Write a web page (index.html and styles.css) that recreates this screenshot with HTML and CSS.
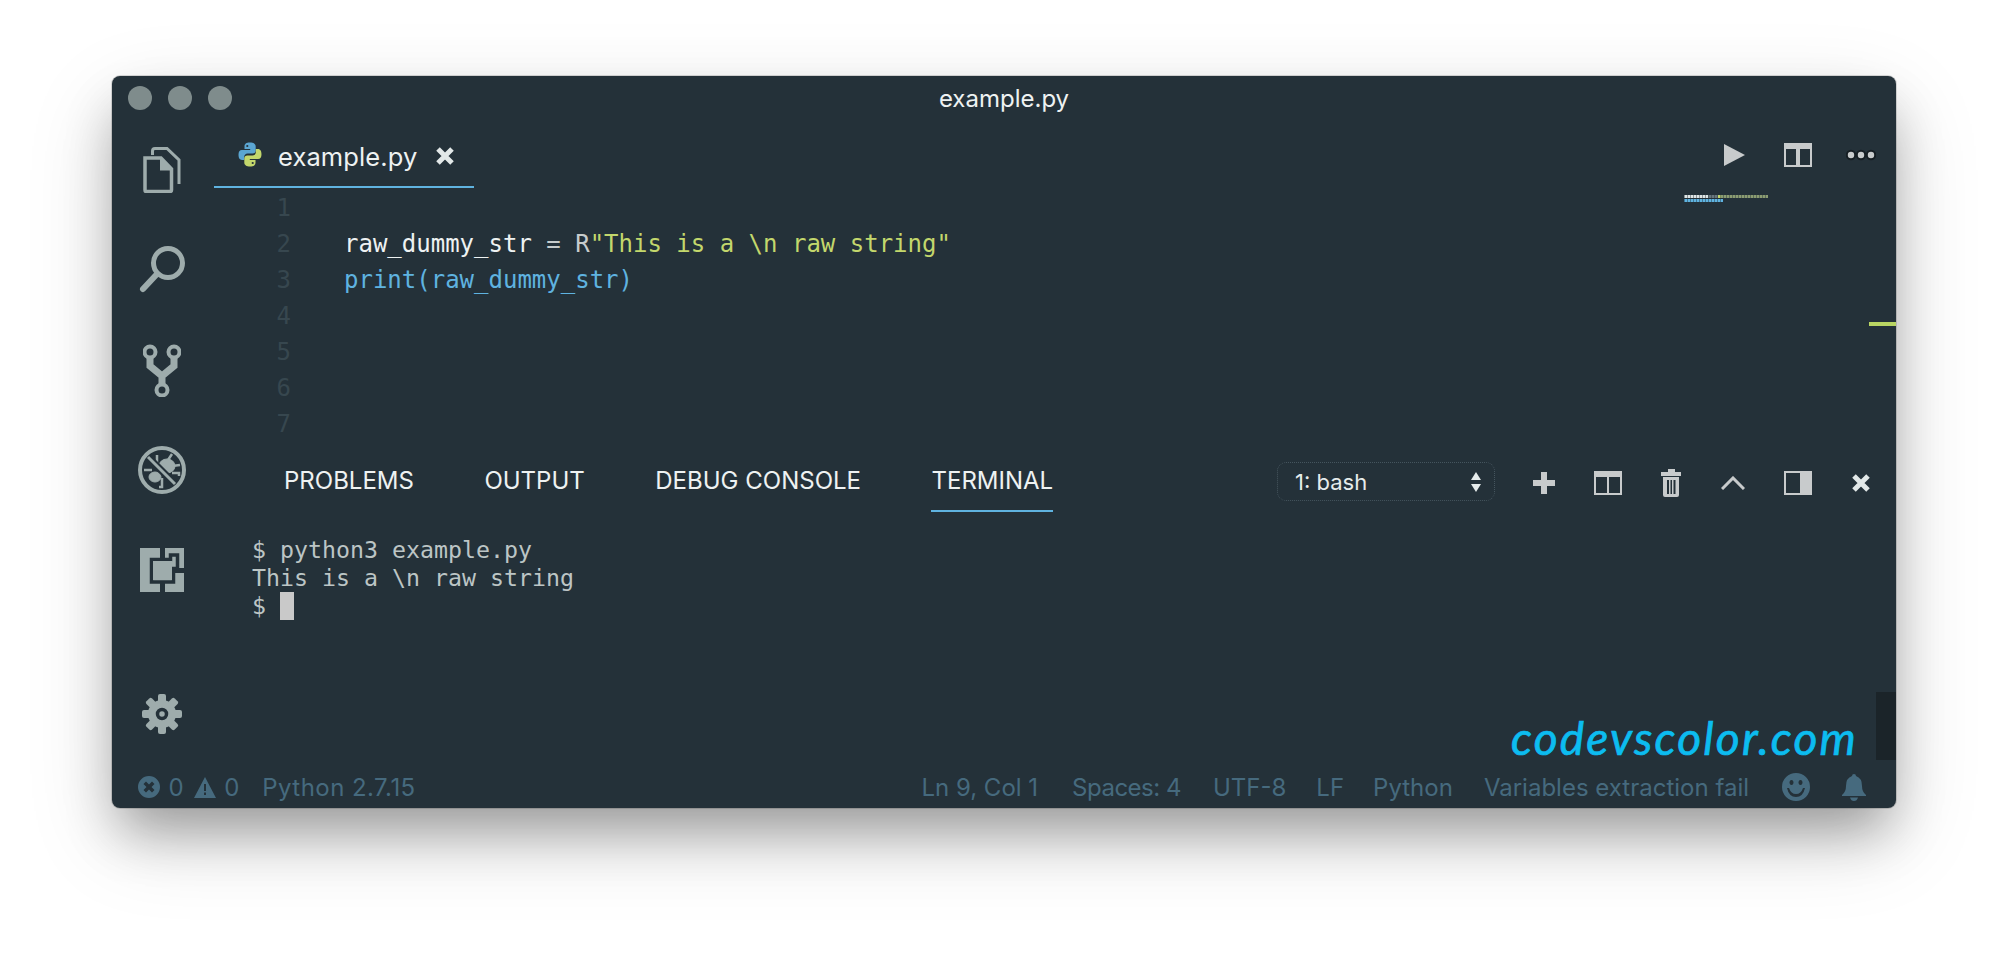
FILE: index.html
```html
<!DOCTYPE html>
<html lang="en">
<head>
<meta charset="utf-8">
<title>example.py</title>
<link rel="stylesheet" href="styles.css">
</head>
<body>
<div class="window">
  <header class="titlebar">
    <div class="lights"><span class="light"></span><span class="light"></span><span class="light"></span></div>
    <div class="title">example.py</div>
  </header>
  <div class="main">
    <nav class="activity">
      <div class="act">
        <svg class="ico" width="38" height="46" viewBox="0 0 38 46"><path d="M2 11 H18 L28.500 22 V43 Q28.500 44.500 27 44.500 H3 Q2 44.500 2 43 Z" fill="none" stroke-width="3.500"/><path d="M17 10 L30 23.500 H17 Z" stroke="none"/><path d="M9.500 8 V4 Q9.500 1.500 12 1.500 H24 L36 13 V37" fill="none" stroke-width="3"/></svg>
      </div>
      <div class="act">
        <svg class="ico" width="48" height="48" viewBox="0 0 48 48"><circle cx="30" cy="17" r="14.500" fill="none" stroke-width="5"/><path d="M19 28 L5 43" fill="none" stroke-width="6" stroke-linecap="round"/></svg>
      </div>
      <div class="act">
        <svg class="ico" width="38" height="53" viewBox="0 0 38 53"><circle cx="7" cy="8" r="5.500" fill="none" stroke-width="4"/><circle cx="31" cy="8" r="5.500" fill="none" stroke-width="4"/><circle cx="19" cy="46" r="5.500" fill="none" stroke-width="4"/><path d="M7 14 V22 L19 32 L31 22 V14 M19 31 V41" fill="none" stroke-width="7"/></svg>
      </div>
      <div class="act">
        <svg class="ico" width="48" height="48" viewBox="0 0 48 48"><circle cx="24" cy="24" r="22" fill="none" stroke-width="4"/><ellipse cx="17" cy="31" rx="6" ry="5"/><ellipse cx="29" cy="20" rx="8" ry="7"/><path d="M6 24 H14 M19 9 V18 M34 8 L30 14 M42 19 L34 20 M41 30 V27 H34 M24 32 V41 L21 41" fill="none" stroke-width="2.500"/><path d="M10 11 L37 38" class="slash-gap" fill="none" stroke-width="7"/><path d="M10 11 L37 38" fill="none" stroke-width="3"/></svg>
      </div>
      <div class="act">
        <svg class="ext" width="44" height="44" viewBox="0 0 44 44"><rect class="ext-light" width="44" height="44"/><path class="ext-dark" d="M11.500 34 V11.500 H30.500 V7 H37.500 V20.500 H33.500 V34 H11.500 Z" fill="none" stroke-width="3.500"/><path class="ext-gap" d="M22.500 0 V10 M34 22.500 H44 M22.500 34 V44" fill="none" stroke-width="5"/><path class="ext-light" d="M13 13 H32 V32 H13 Z"/></svg>
      </div>
      <div class="act act-gear">
        <svg class="ico" width="40" height="40" viewBox="0 0 40 40"><g stroke="none"><circle cx="20" cy="20" r="14"/><rect x="16" y="0" width="8" height="40" rx="2"/><rect x="16" y="0" width="8" height="40" rx="2" transform="rotate(45 20 20)"/><rect x="16" y="0" width="8" height="40" rx="2" transform="rotate(90 20 20)"/><rect x="16" y="0" width="8" height="40" rx="2" transform="rotate(135 20 20)"/></g><circle class="gear-hole" cx="20" cy="20" r="4.500" fill="none" stroke-width="3.500"/></svg>
      </div>
    </nav>
    <div class="content">
      <div class="tabbar">
        <div class="tab">
          <svg class="pylogo" width="24" height="25" viewBox="0 0 24 25"><path class="py-blue" d="M12 .5C8 .5 6.500 2 6.500 4.500V7h5.700v1H4C1.500 8 .5 10 .5 12.800S1.500 18 4 18h2.200v-3.200c0-2 1.500-3.300 3.500-3.300h5c1.800 0 3-1.300 3-3V4.500C17.700 2 15.500 .5 12 .5z"/><path class="py-green" d="M12 24.500c4 0 5.500-1.500 5.500-4V18h-5.700v-1H20c2.500 0 3.500-2 3.500-4.800S22.500 7 20 7h-2.200v3.200c0 2-1.500 3.300-3.500 3.300h-5c-1.800 0-3 1.300-3 3v4c0 2.500 2.200 4 5.700 4z"/><circle class="py-eye" cx="9.300" cy="4" r="1.100"/><circle class="py-eye" cx="14.700" cy="21" r="1.100"/></svg>
          <span class="tab-name">example.py</span>
          <svg class="tab-x" width="20" height="20" viewBox="0 0 20 20"><path d="M3 3 L17 17 M17 3 L3 17" fill="none" stroke-width="5"/></svg>
        </div>
        <div class="actions">
          <svg class="tool play" width="22" height="24" viewBox="0 0 22 24"><path d="M1 1 L22 12 L1 23 Z"/></svg>
          <svg class="tool" width="28" height="24" viewBox="0 0 28 24"><path d="M0 0 H28 V24 H0 Z M2 6 V22 H12 V6 Z M16 6 V22 H26 V6 Z" fill-rule="evenodd"/></svg>
          <svg class="tool dots" width="30" height="12" viewBox="0 0 30 12"><circle cx="5" cy="6" r="4.200"/><circle cx="15" cy="6" r="4.200"/><circle cx="25" cy="6" r="4.200"/></svg>
        </div>
      </div>
      <section class="editor">
        <div class="line"><span class="ln">1</span></div>
        <div class="line"><span class="ln">2</span><code class="code"><span class="c-var">raw_dummy_str</span> <span class="c-op">=</span> <span class="c-op">R</span><span class="c-str">"This is a \n raw string"</span></code></div>
        <div class="line"><span class="ln">3</span><code class="code c-fn">print(raw_dummy_str)</code></div>
        <div class="line"><span class="ln">4</span></div>
        <div class="line"><span class="ln">5</span></div>
        <div class="line"><span class="ln">6</span></div>
        <div class="line"><span class="ln">7</span></div>
        <div class="minimap"><span class="mm mm-a"></span><span class="mm mm-b"></span></div>
        <div class="marker"></div>
      </section>
      <section class="panel">
        <div class="panel-head">
          <div class="ptabs">
            <span class="ptab">PROBLEMS</span>
            <span class="ptab">OUTPUT</span>
            <span class="ptab">DEBUG CONSOLE</span>
            <span class="ptab ptab-on">TERMINAL</span>
          </div>
          <div class="ptools">
            <div class="select"><span>1: bash</span>
              <svg class="tool sel-arrows" width="12" height="22" viewBox="0 0 12 22"><path d="M6 1 L11 9 H1 Z M6 21 L11 13 H1 Z"/></svg>
            </div>
            <div class="ptool-row">
              <svg class="tool" width="22" height="22" viewBox="0 0 22 22"><path d="M8 0 H14 V8 H22 V14 H14 V22 H8 V14 H0 V8 H8 Z"/></svg>
              <svg class="tool" width="28" height="24" viewBox="0 0 28 24"><path d="M0 0 H28 V24 H0 Z M2 6 V22 H13 V6 Z M15 6 V22 H26 V6 Z" fill-rule="evenodd"/></svg>
              <svg class="tool" width="20" height="28" viewBox="0 0 20 28"><path d="M7 0 H14 V3 H20 V7 H0 V3 H7 Z M2 8 H18 V26 Q18 28 16 28 H4 Q2 28 2 26 Z M6 11 V25 H8 V11 Z M9.500 11 V25 H11 V11 Z M12.500 11 V25 H14.500 V11 Z" fill-rule="evenodd"/></svg>
              <svg class="tool" width="24" height="14" viewBox="0 0 24 14"><path d="M1 13 L12 2 L23 13" fill="none" stroke-width="3"/></svg>
              <svg class="tool" width="28" height="24" viewBox="0 0 28 24"><path d="M0 0 H28 V24 H0 Z M2 2 V22 H16 V2 Z" fill-rule="evenodd"/></svg>
              <svg class="tool tool-x" width="20" height="20" viewBox="0 0 20 20"><path d="M3 3 L17 17 M17 3 L3 17" fill="none" stroke-width="5"/></svg>
            </div>
          </div>
        </div>
        <div class="term">
          <div class="tline">$ python3 example.py</div>
          <div class="tline">This is a \n raw string</div>
          <div class="tline prompt">$ <span class="cursor"></span></div>
        </div>
        <div class="term-thumb"></div>
        <div class="brand">codevscolor.com</div>
      </section>
    </div>
  </div>
  <footer class="status">
    <div class="st-left">
      <svg class="st-ico" width="22" height="22" viewBox="0 0 22 22"><path d="M11 0a11 11 0 1 0 0 22a11 11 0 0 0 0-22z M5.500 8 L8 5.500 L11 8.500 L14 5.500 L16.500 8 L13.500 11 L16.500 14 L14 16.500 L11 13.500 L8 16.500 L5.500 14 L8.500 11 Z" fill-rule="evenodd"/></svg>
      <span class="st-num">0</span>
      <svg class="st-ico warn" width="22" height="21" viewBox="0 0 22 21"><path d="M11 0 L22 21 H0 Z M10 7 V14 H12 V7 Z M10 15.500 V18 H12 V15.500 Z" fill-rule="evenodd"/></svg>
      <span class="st-num">0</span>
      <span class="st-py">Python 2.7.15</span>
    </div>
    <div class="st-right">
      <span>Ln 9, Col 1</span>
      <span class="st-spaces">Spaces: 4</span>
      <span>UTF-8</span>
      <span class="st-lf">LF</span>
      <span>Python</span>
      <span class="st-msg">Variables extraction fail</span>
      <svg class="st-ico smile" width="28" height="28" viewBox="0 0 28 28"><path d="M14 0a14 14 0 1 0 0 28a14 14 0 0 0 0-28z M9.500 7 a2 2.500 0 1 1 -.01 0z M18.500 7 a2 2.500 0 1 1 -.01 0z M5 15 h2 Q9 21 14 21 T21 15 h2 Q21 24 14 24 T5 15z" fill-rule="evenodd"/></svg>
      <svg class="st-ico bell" width="24" height="27" viewBox="0 0 24 27"><path d="M12 0 Q14 0 14 2 Q20 4 20 12 Q20 18 24 21 V22 H0 V21 Q4 18 4 12 Q4 4 10 2 Q10 0 12 0 Z M8 23.500 H16 Q15 27 12 27 Q9 27 8 23.500 Z"/></svg>
    </div>
  </footer>
</div>
</body>
</html>
```

FILE: styles.css
```css
* { box-sizing: border-box; }
html, body { margin: 0; height: 100%; background: #fff; }
body { overflow: hidden; font-family: Inter, "Noto Sans", sans-serif; }

.window {
  position: relative;
  display: flex;
  flex-direction: column;
  width: 1784px;
  height: 732px;
  margin: 76px 0 0 112px;
  background: #243139;
  border-radius: 8px;
  box-shadow: 0 0 0 1px rgba(0,0,0,.14), 0 30px 50px -8px rgba(0,0,0,.32), 0 30px 90px rgba(0,0,0,.14);
  color: #e6ecec;
}

.titlebar { position: relative; flex: 0 0 44px; display: flex; align-items: center; justify-content: center; }
.lights { position: absolute; left: 16px; top: 10px; display: flex; gap: 16px; }
.light { width: 24px; height: 24px; border-radius: 50%; background: #7f8c8c; }
.title { font-size: 24px; color: #eef2f2; }

.main { flex: 1; display: flex; min-height: 0; }
.activity { flex: 0 0 102px; display: flex; flex-direction: column; }
.act { height: 100px; display: flex; align-items: center; justify-content: center; padding-right: 2px; }
.act-gear { margin-top: auto; }
.ico { fill: #9eacac; stroke: #9eacac; }
.slash-gap { stroke: #243139; }
.ext-light { fill: #9eacac; }
.ext-dark, .ext-gap { stroke: #243139; }
.gear-hole { stroke: #243139; }

.content { position: relative; flex: 1; display: flex; flex-direction: column; min-width: 0; }

.tabbar { flex: 0 0 68px; display: flex; justify-content: space-between; }
.tab { width: 260px; height: 68px; padding: 6px 0 0 24px; display: flex; align-items: center; border-bottom: 2px solid #5fb3e0; }
.pylogo { margin: -4px 16px 0 0; flex: none; }
.py-blue { fill: #5ba6d2; }
.py-green { fill: #c3d76c; }
.py-eye { fill: #243139; }
.tab-name { font-size: 25.500px; color: #eef2f2; letter-spacing: .1px; }
.tab-x { margin-left: 18px; stroke: #e2e8e8; flex: none; }
.tool { fill: #c8cbcc; stroke: #c8cbcc; stroke-width: 0; flex: none; }
.tool-x { stroke: #e2e8e8; }
.sel-arrows { fill: #e6ecec; }
.actions { display: flex; align-items: center; gap: 34px; padding: 2px 20px 0 0; }
.play { margin-right: 5px; }
.dots { fill: #c8cbcc; stroke: #161e23; stroke-width: 2px; }

.editor { position: relative; flex: 0 0 258px; padding-top: 2px; font-family: "DejaVu Sans Mono", "Liberation Mono", monospace; font-size: 24px; }
.line { height: 36px; line-height: 36px; display: flex; }
.ln { flex: 0 0 130px; padding-right: 53px; text-align: right; color: #37474f; }
.code { font-family: inherit; font-size: inherit; white-space: pre; }
.c-var { color: #eef2f2; }
.c-op { color: #c7cccc; }
.c-str { color: #c3d76c; }
.c-fn { color: #5fb3e0; }
.minimap { position: absolute; left: 1470px; top: 7px; display: flex; flex-direction: column; gap: 1px; }
.mm { display: block; height: 3px; }
.mm-a { width: 84px; background: repeating-linear-gradient(90deg, rgba(36,49,57,.45) 0 1px, transparent 1px 3px), linear-gradient(90deg, #dfe5e5 0 29%, #69777c 29% 40%, #c3d76c 40% 44%, #8b9c72 44% 100%); }
.mm-b { width: 39px; background: repeating-linear-gradient(90deg, rgba(36,49,57,.45) 0 1px, transparent 1px 3px), linear-gradient(#5fb3e0, #5fb3e0); }
.marker { position: absolute; right: 0; top: 134px; width: 27px; height: 4px; background: #b9d563; }

.panel { position: relative; flex: 1; min-height: 0; }
.panel-head { height: 68px; display: flex; justify-content: space-between; }
.ptabs { display: flex; gap: 70.500px; padding-left: 70px; }
.ptab { height: 66px; padding-top: 19px; font-size: 24px; line-height: 32px; color: #eef2f2; }
.ptab-on { border-bottom: 2px solid #5fb3e0; }
.ptools { display: flex; align-items: flex-start; padding: 16px 0 0; }
.select { width: 218px; height: 39px; padding: 0 12px 0 17px; display: flex; align-items: center; justify-content: space-between; border: 1px dotted #45555e; border-radius: 9px; font-size: 22px; color: #e6ecec; }
.ptool-row { width: 401px; padding: 3px 25px 0 38px; height: 39px; display: flex; align-items: center; justify-content: space-between; }
.term { padding: 22px 0 0 38px; font-family: "DejaVu Sans Mono", "Liberation Mono", monospace; font-size: 23.250px; line-height: 28px; color: #bcc5c5; }
.tline { white-space: pre; }
.prompt { display: flex; }
.cursor { width: 14px; height: 28px; background: #c9c9c9; }
.term-thumb { position: absolute; right: 0; bottom: 4px; width: 20px; height: 68px; background: #1b2429; }
.brand { position: absolute; right: 38px; bottom: -2px; font-family: Lato, sans-serif; font-style: italic; font-size: 46px; line-height: 56px; color: #0cbcf0; letter-spacing: 2.200px; -webkit-text-stroke: .7px #0cbcf0; }

.status { flex: 0 0 44px; display: flex; justify-content: space-between; align-items: center; padding: 2px 30px 0 26px; font-size: 24px; color: #466a7e; }
.st-left, .st-right { display: flex; align-items: center; }
.st-ico { fill: #466a7e; flex: none; }
.st-num { margin-left: 8.500px; }
.warn { margin-left: 10px; }
.st-py { margin-left: 23px; letter-spacing: .45px; }
.st-right { gap: 32px; }
.st-spaces { letter-spacing: -.5px; margin-left: 2px; }
.st-lf { margin: 0 -3px 0 -2px; }
.st-msg { margin-left: -1px; }
.smile { margin-left: 1px; }
```
